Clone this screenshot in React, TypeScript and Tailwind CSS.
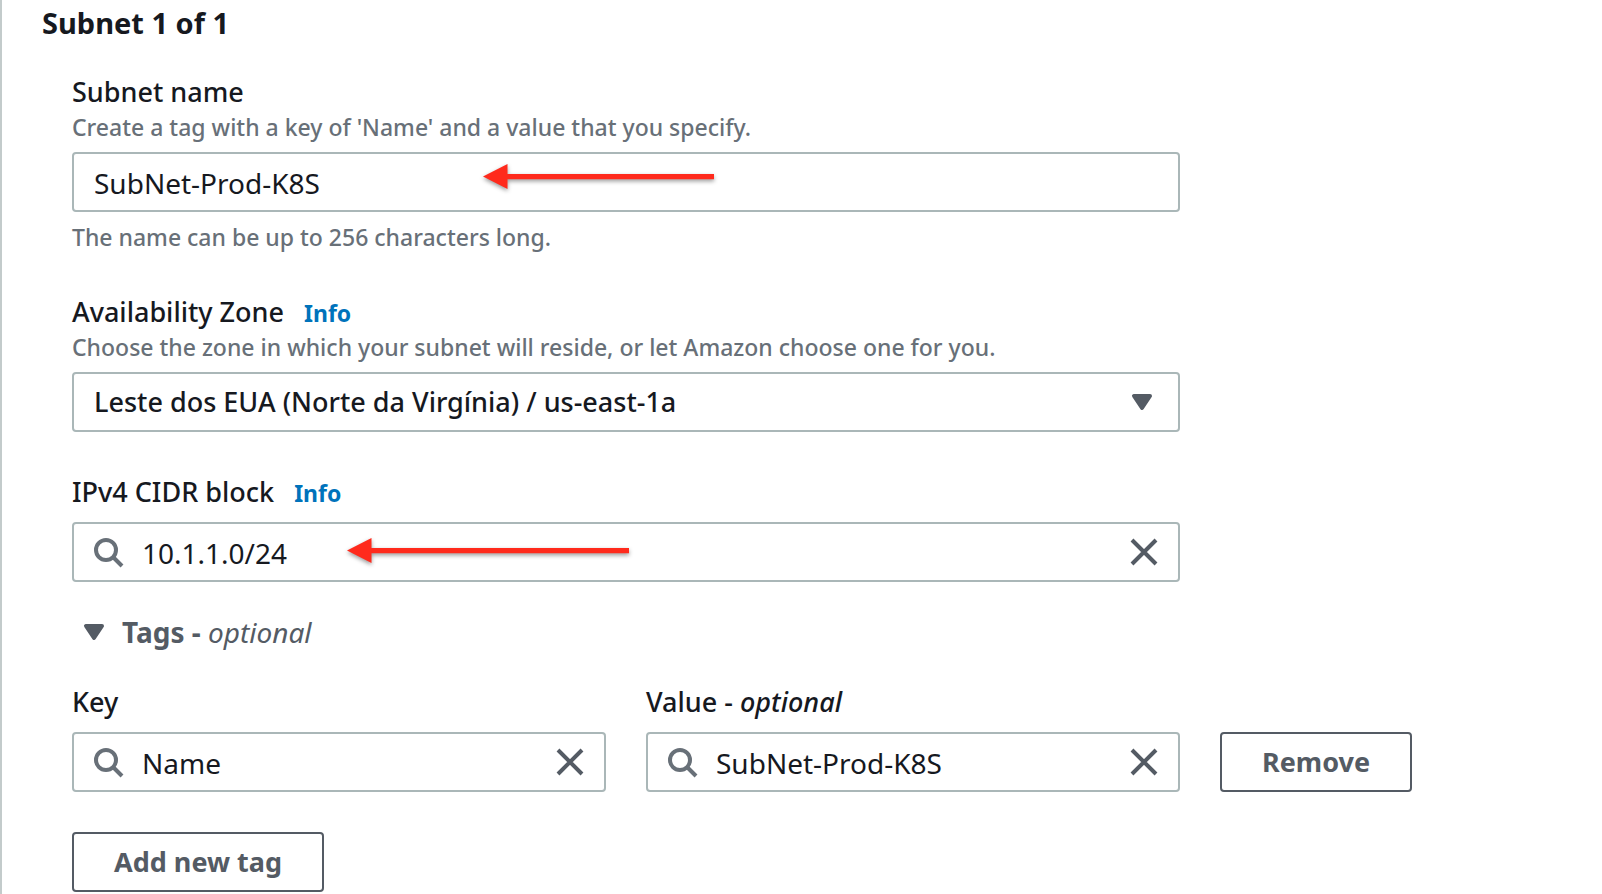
import { useState, type ReactNode } from 'react';

const inputClass =
  'block h-[60px] w-full rounded-[4px] border-2 border-[#aab7b8] bg-white pt-0.5 text-[28px] leading-9 text-[#16191f] outline-none focus:border-[#00a1c9]';
const labelClass = 'text-[27px] leading-[38px] font-medium';
const hintClass = 'text-[23px] leading-8 font-medium text-[#687078]';
const buttonClass =
  'h-[60px] rounded-[4px] border-2 border-[#545b64] bg-white px-10 text-[27px] leading-9 font-bold whitespace-nowrap text-[#545b64] hover:bg-[#fafafa]';

function CaretIcon({ className = '' }: { className?: string }) {
  return (
    <svg viewBox="0 0 16 16" className={`size-8 text-[#545b64] ${className}`} aria-hidden="true">
      <path d="M4 5h8l-4 6z" fill="currentColor" stroke="currentColor" strokeWidth="2" strokeLinejoin="round" />
    </svg>
  );
}

function SearchIcon() {
  return (
    <svg
      viewBox="0 0 16 16"
      className="pointer-events-none absolute top-3.5 left-5 size-8 text-[#687078]"
      fill="none"
      stroke="currentColor"
      strokeWidth="2"
      aria-hidden="true"
    >
      <circle cx="7" cy="7" r="5" />
      <path d="M15 15l-4.5-4.5" />
    </svg>
  );
}

function CloseIcon() {
  return (
    <svg viewBox="0 0 16 16" className="size-8" fill="none" stroke="currentColor" strokeWidth="2" aria-hidden="true">
      <path d="M2 2l12 12M14 2L2 14" />
    </svg>
  );
}

function Arrow({ length, className }: { length: number; className: string }) {
  return (
    <svg
      width={length + 4}
      height="36"
      className={`pointer-events-none absolute drop-shadow-[0_2px_2px_rgba(0,0,0,0.4)] ${className}`}
      fill="#ff2a1c"
      aria-hidden="true"
    >
      <path d={`M0 16.5L24.5 4v10H${length}v5.3H24.5V29z`} />
    </svg>
  );
}

function InfoLink() {
  return (
    <a href="#info" className="text-[23px] leading-8 font-bold text-[#0073bb] hover:underline">
      Info
    </a>
  );
}

function SearchField({ id, initial, children }: { id: string; initial: string; children?: ReactNode }) {
  const [value, setValue] = useState(initial);
  return (
    <div className="relative mt-[11px]">
      <SearchIcon />
      <input
        id={id}
        type="text"
        value={value}
        onChange={(e) => setValue(e.target.value)}
        className={`${inputClass} pr-16 pl-[68px]`}
      />
      {value && (
        <button
          type="button"
          aria-label="Clear"
          onClick={() => setValue('')}
          className="absolute top-3.5 right-5 text-[#545b64]"
        >
          <CloseIcon />
        </button>
      )}
      {children}
    </div>
  );
}

export default function App() {
  const [name, setName] = useState('SubNet-Prod-K8S');
  const [open, setOpen] = useState(true);

  return (
    <main className="min-h-screen border-l-2 border-[#c3cbcb] bg-white pt-[5px] pr-10 pl-10 font-['Noto_Sans',sans-serif] text-[#16191f]">
      <h2 className="text-[29px] leading-9 font-bold">Subnet 1 of 1</h2>

      <form className="mt-8 pl-[30px]" onSubmit={(e) => e.preventDefault()}>
        <div className="max-w-[1108px]">
          <label htmlFor="subnet-name" className={`block ${labelClass}`}>
            Subnet name
          </label>
          <p className={hintClass}>Create a tag with a key of 'Name' and a value that you specify.</p>
          <div className="relative mt-[9px]">
            <input
              id="subnet-name"
              type="text"
              value={name}
              onChange={(e) => setName(e.target.value)}
              className={`${inputClass} px-5`}
            />
            <Arrow length={231} className="top-2 left-[411px]" />
          </div>
          <p className={`mt-[9px] ${hintClass}`}>The name can be up to 256 characters long.</p>
        </div>

        <div className="mt-10 max-w-[1108px]">
          <div className="flex items-baseline gap-5">
            <label htmlFor="zone" className={labelClass}>
              Availability Zone
            </label>
            <InfoLink />
          </div>
          <p className={hintClass}>Choose the zone in which your subnet will reside, or let Amazon choose one for you.</p>
          <div className="relative mt-[9px]">
            <select
              id="zone"
              className="block h-[60px] w-full appearance-none rounded-[4px] border-2 border-[#aab7b8] bg-white pr-16 pl-5 text-[27px] leading-9 font-medium text-[#16191f]"
            >
              <option>Leste dos EUA (Norte da Virgínia) / us-east-1a</option>
            </select>
            <CaretIcon className="pointer-events-none absolute top-3.5 right-[22px]" />
          </div>
        </div>

        <div className="mt-[41px] max-w-[1108px]">
          <div className="flex items-baseline gap-5">
            <label htmlFor="cidr" className={labelClass}>
              IPv4 CIDR block
            </label>
            <InfoLink />
          </div>
          <SearchField id="cidr" initial="10.1.1.0/24">
            <Arrow length={282} className="top-3 left-[275px]" />
          </SearchField>
        </div>

        <button
          type="button"
          aria-expanded={open}
          onClick={() => setOpen(!open)}
          className="mt-[31px] flex items-center gap-3 pl-1.5 text-[28px] leading-[38px] text-[#545b64]"
        >
          <CaretIcon className={open ? '' : '-rotate-90'} />
          <span>
            <span className="font-bold">Tags - </span>
            <i>optional</i>
          </span>
        </button>

        {open && (
          <>
            <div className="mt-8 grid grid-cols-[minmax(0,534px)_minmax(0,534px)_auto] items-end justify-start gap-10">
              <div>
                <label htmlFor="tag-key" className={`block ${labelClass}`}>
                  Key
                </label>
                <SearchField id="tag-key" initial="Name" />
              </div>
              <div>
                <label htmlFor="tag-value" className={`block ${labelClass}`}>
                  Value - <i>optional</i>
                </label>
                <SearchField id="tag-value" initial="SubNet-Prod-K8S" />
              </div>
              <button type="button" className={buttonClass}>
                Remove
              </button>
            </div>
            <button type="button" className={`mt-10 ${buttonClass}`}>
              Add new tag
            </button>
          </>
        )}
      </form>
    </main>
  );
}
